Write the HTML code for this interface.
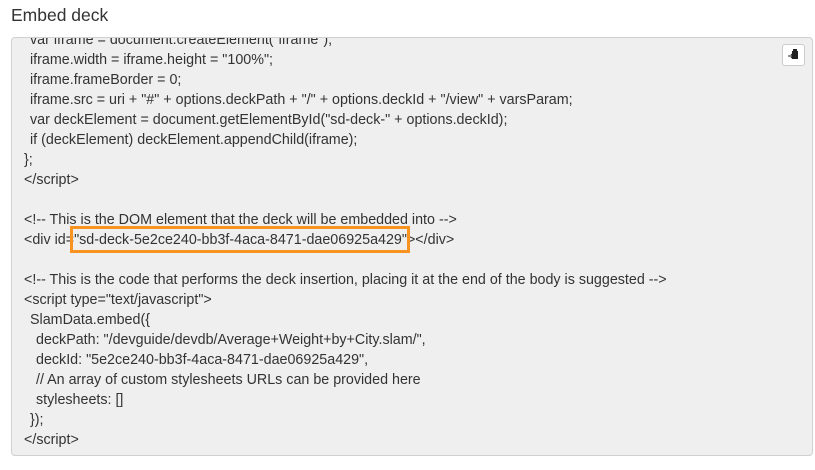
<!DOCTYPE html>
<html><head><style>
body{margin:0;width:815px;height:470px;background:#fff;font-family:"Liberation Sans",sans-serif;color:#333;overflow:hidden;position:relative}
h3{position:absolute;left:11px;top:5px;margin:0;font-size:17.5px;font-weight:normal;color:#333}
.box{position:absolute;left:11px;top:37px;width:800px;height:417px;background:#efefef;border:1px solid #d0d0d0;border-radius:4px;overflow:hidden}
.l{position:absolute;white-space:pre;font-size:14.3px;line-height:20px;left:12px}
.hl{position:absolute;left:58px;top:188px;width:334px;height:21px;border:3px solid #f7931e}
.btn{position:absolute;right:7px;top:6px;width:21px;height:20px;background:#fff;border:1px solid #ccc;border-radius:3px}
</style></head><body>
<h3>Embed deck</h3>
<div class="box">
<div class="btn"><svg width="21" height="20" viewBox="0 0 21 20"><rect x="9" y="6" width="6" height="8" fill="#222"/><rect x="10" y="4" width="4" height="3" fill="#222"/><path d="M5 11h5M8 9l2 2-2 2" stroke="#222" stroke-width="1" fill="none"/></svg></div>
<div class="l" style="top:-8px;left:18px">var iframe = document.createElement("iframe");</div>
<div class="l" style="top:12px;left:18px">iframe.width = iframe.height = "100%";</div>
<div class="l" style="top:32px;left:18px">iframe.frameBorder = 0;</div>
<div class="l" style="top:52px;left:18px">iframe.src = uri + "#" + options.deckPath + "/" + options.deckId + "/view" + varsParam;</div>
<div class="l" style="top:72px;left:18px">var deckElement = document.getElementById("sd-deck-" + options.deckId);</div>
<div class="l" style="top:92px;left:18px">if (deckElement) deckElement.appendChild(iframe);</div>
<div class="l" style="top:112px">};</div>
<div class="l" style="top:132px">&lt;/script&gt;</div>
<div class="l" style="top:172px">&lt;!-- This is the DOM element that the deck will be embedded into --&gt;</div>
<div class="l" style="top:192px">&lt;div id="sd-deck-5e2ce240-bb3f-4aca-8471-dae06925a429"&gt;&lt;/div&gt;</div>
<div class="hl"></div>
<div class="l" style="top:232px">&lt;!-- This is the code that performs the deck insertion, placing it at the end of the body is suggested --&gt;</div>
<div class="l" style="top:252px">&lt;script type="text/javascript"&gt;</div>
<div class="l" style="top:272px;left:18px">SlamData.embed({</div>
<div class="l" style="top:292px;left:24px">deckPath: "/devguide/devdb/Average+Weight+by+City.slam/",</div>
<div class="l" style="top:312px;left:24px">deckId: "5e2ce240-bb3f-4aca-8471-dae06925a429",</div>
<div class="l" style="top:332px;left:24px">// An array of custom stylesheets URLs can be provided here</div>
<div class="l" style="top:352px;left:24px">stylesheets: []</div>
<div class="l" style="top:372px;left:18px">});</div>
<div class="l" style="top:392px">&lt;/script&gt;</div>
</div>
</body></html>
